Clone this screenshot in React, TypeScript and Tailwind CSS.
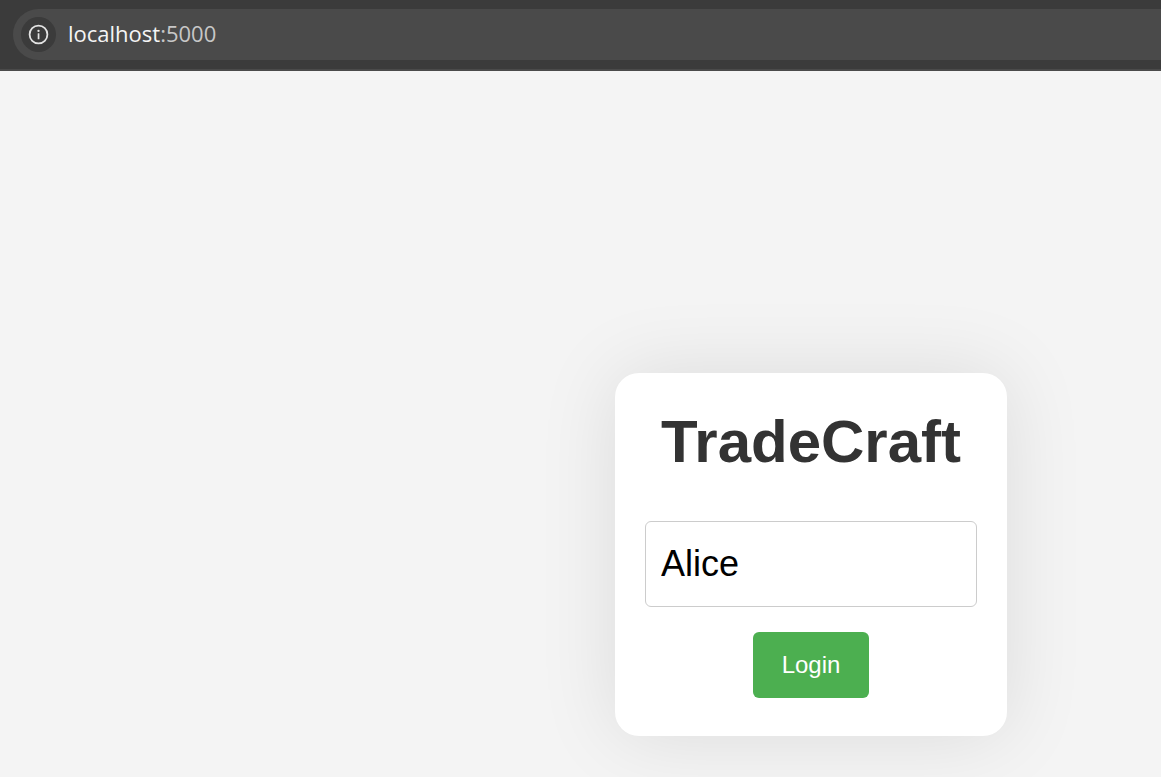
import { useState } from "react";

function AddressBar() {
  const [url, setUrl] = useState("localhost:5000");
  const [host, port] = url.split(/(?=:)/);
  return (
    <header className="h-[71px] shrink-0 border-b-2 border-[#4a4a4a] bg-[#3b3b3b] pt-[9px] pl-[13px]">
      <div className="flex h-[51px] items-center rounded-l-full bg-[#4a4a4a] pl-2">
        <button
          type="button"
          aria-label="View site information"
          onClick={() => setUrl("localhost:5000")}
          className="flex size-[35px] items-center justify-center rounded-full bg-[#3b3b3b] text-[#e3e3e3]"
        >
          <svg viewBox="0 0 19 19" className="size-[19px] overflow-visible" fill="none" aria-hidden="true">
            <circle cx="9.5" cy="9.5" r="8.9" stroke="currentColor" strokeWidth="1.8" />
            <rect x="8.7" y="8.3" width="1.7" height="5.9" rx="0.3" fill="currentColor" />
            <circle cx="9.5" cy="5.9" r="1.15" fill="currentColor" />
          </svg>
        </button>
        <p className="pb-1 pl-3 font-['Open_Sans',sans-serif] text-[22px] leading-8 text-[#c7c7c7]">
          <span className="text-[#f5f5f5]">{host}</span>
          {port}
        </p>
      </div>
    </header>
  );
}

function LoginCard() {
  const [name, setName] = useState("Alice");
  return (
    <form
      onSubmit={(e) => e.preventDefault()}
      className="flex w-[392px] flex-col items-center rounded-3xl bg-white px-[30px] pt-[33px] pb-[38px] shadow-[0_0_80px_rgba(0,0,0,0.1)]"
    >
      <h1 className="text-[60px] leading-[72px] font-bold text-[#333333]">TradeCraft</h1>
      <input
        type="text"
        aria-label="Username"
        value={name}
        onChange={(e) => setName(e.target.value)}
        className="mt-[43px] h-[86px] w-full rounded-md border border-[#cccccc] bg-white px-[15px] text-[36px] text-black outline-none"
      />
      <button
        type="submit"
        className="mt-[25px] h-[66px] rounded-md bg-[#4caf50] px-[29px] text-[24px] text-white"
      >
        Login
      </button>
    </form>
  );
}

export default function App() {
  return (
    <div className="flex min-h-screen flex-col bg-[#f4f4f4] font-['Liberation_Sans',Arial,sans-serif]">
      <AddressBar />
      <main className="flex flex-1 items-end justify-end overflow-hidden pr-[154px] pb-[41px]">
        <LoginCard />
      </main>
    </div>
  );
}
